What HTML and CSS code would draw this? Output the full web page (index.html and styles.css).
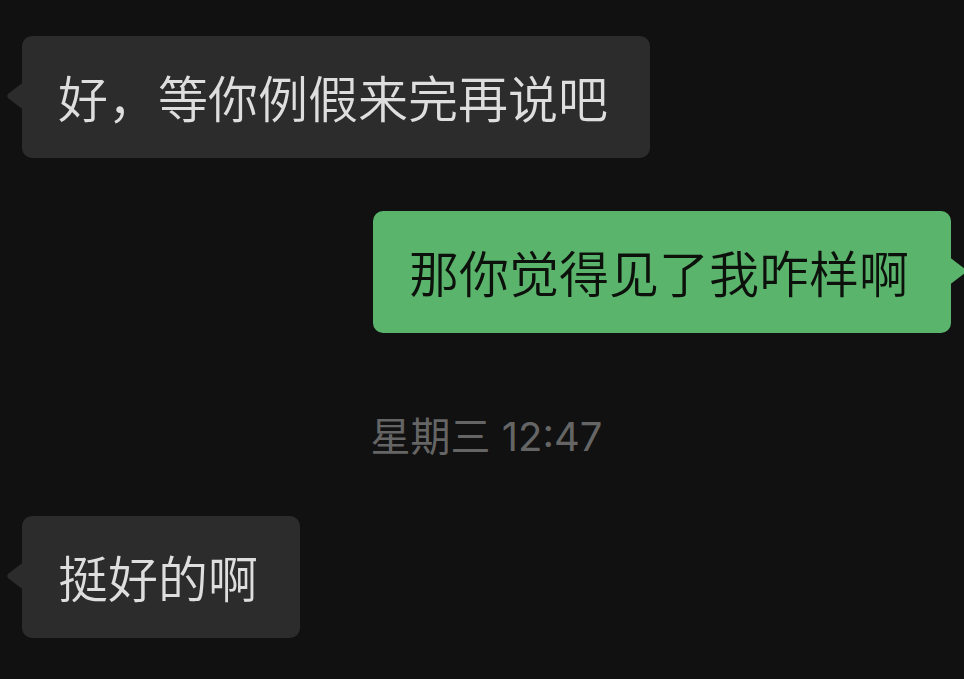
FILE: index.html
```html
<!DOCTYPE html>
<html lang="zh-CN">
<head>
  <meta charset="UTF-8" />
  <meta name="viewport" content="width=device-width, initial-scale=1.0" />
  <title>聊天</title>
  <link rel="stylesheet" href="styles.css">
</head>
<body>
  <div class="chat">
    <div class="row left first">
      <div class="bubble in">好，等你例假来完再说吧</div>
    </div>
    <div class="row right">
      <div class="bubble out">那你觉得见了我咋样啊</div>
    </div>
    <div class="time">星期三 12:47</div>
    <div class="row left">
      <div class="bubble in">挺好的啊</div>
    </div>
  </div>
</body>
</html>
```
FILE: styles.css
```css
html, body {
  margin: 0;
  background: #111111;
  height: 100%;
  overflow: hidden;
}

body {
  font-family: "Noto Sans CJK SC", "Noto Sans", sans-serif;
}

.chat {
  display: flex;
  flex-direction: column;
  padding: 36px 13px 0 22px;
}

.row {
  display: flex;
}

.row.right {
  justify-content: flex-end;
  margin-top: 53px;
}

.bubble {
  position: relative;
  font-size: 50px;
  font-weight: 350;
  line-height: 70px;
  padding: 25px 42px 27px 36px;
  border-radius: 10px;
  white-space: nowrap;
}

.bubble.in {
  background: #2c2c2c;
  color: #dedede;
}

.bubble.out {
  background: #5bb46c;
  color: #0c110c;
}

/* little pointer on the side of each bubble */
.bubble::before {
  content: "";
  position: absolute;
  top: 45px;
  width: 18px;
  height: 30px;
  background: inherit;
}

.bubble.in::before {
  left: -15px;
  clip-path: polygon(100% 0, 8% 42%, 0 50%, 8% 58%, 100% 100%);
}

.bubble.out::before {
  right: -15px;
  clip-path: polygon(0 0, 92% 42%, 100% 50%, 92% 58%, 0 100%);
}

.time {
  align-self: center;
  margin-top: 79px;
  font-family: "Inter", "Noto Sans CJK SC", sans-serif;
  font-size: 40px;
  line-height: 50px;
  color: #656565;
}

.time + .row {
  margin-top: 54px;
}
```
